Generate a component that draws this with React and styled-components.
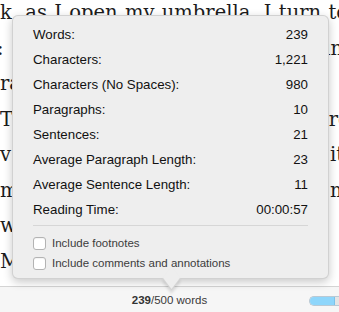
import React from 'react';
import styled, { createGlobalStyle } from 'styled-components';

const GlobalStyle = createGlobalStyle`
  html, body {
    margin: 0;
    padding: 0;
    background: #ffffff;
  }
  body {
    width: 339px;
    height: 312px;
    overflow: hidden;
  }
`;

const Screen = styled.div`
  position: relative;
  width: 339px;
  height: 312px;
  overflow: hidden;
  display: flex;
  flex-direction: column;
`;

const Document = styled.div`
  flex: 1;
  overflow: hidden;
  background: #ffffff;
`;

const Line = styled.div`
  width: ${p => p.$w ? `${p.$w}px` : 'auto'};
  height: 35.5px;
  line-height: 35.5px;
  margin-left: ${p => p.$shift || 0}px;
  margin-top: ${p => p.$first ? '-5px' : '0'};
  text-align: justify;
  text-align-last: ${p => p.$w ? 'justify' : 'left'};
  white-space: ${p => p.$w ? 'normal' : 'nowrap'};
  font-family: "DejaVu Serif", "Liberation Serif", serif;
  font-size: 19.5px;
  color: #1c1c1c;
`;

const StatusBar = styled.div`
  height: 25px;
  border-top: 1px solid #d4d4d4;
  background: #f6f6f6;
  display: grid;
  grid-template-columns: 1fr auto 1fr;
  align-items: center;
  font-family: "Liberation Sans", Arial, sans-serif;
  font-size: 11.5px;
  color: #3a3a3a;
`;

const Count = styled.div`
  grid-column: 2;
  padding-top: 1px;
  b {
    font-weight: bold;
    color: #333;
  }
`;

const Progress = styled.div`
  grid-column: 3;
  justify-self: end;
  width: 29px;
  height: 8px;
  margin-top: 2px;
  border: 1px solid #b9c9d4;
  border-right: none;
  border-radius: 5px 0 0 5px;
  background: #e4e4e4;
  overflow: hidden;
  display: flex;
`;

const Fill = styled.div`
  height: 100%;
  background: #8ed6fb;
  border-right: 1px solid #7cc3ea;
`;

const Popover = styled.div`
  position: absolute;
  left: 12px;
  top: 15px;
  width: 317px;
  height: 264px;
  box-sizing: border-box;
  padding: 6px 20px 0 20px;
  background: #eeeeee;
  border: 1px solid rgba(0, 0, 0, 0.12);
  border-radius: 6px;
  box-shadow: 0 3px 10px rgba(0, 0, 0, 0.22);
  font-family: "Liberation Sans", Arial, sans-serif;
  color: #111;

  &::after {
    content: '';
    position: absolute;
    left: 151px;
    bottom: -8px;
    width: 14px;
    height: 14px;
    background: #eeeeee;
    transform: rotate(45deg) skew(8deg, 8deg);
    box-shadow: 2px 2px 3px rgba(0, 0, 0, 0.12);
    border-right: 1px solid rgba(0, 0, 0, 0.1);
    border-bottom: 1px solid rgba(0, 0, 0, 0.1);
  }
`;

const StatRow = styled.div`
  height: 25px;
  display: flex;
  align-items: center;
  justify-content: space-between;
  font-size: 13.3px;
`;

const Divider = styled.div`
  height: 1px;
  background: #d6d6d6;
  margin-top: 3px;
  margin-bottom: 7px;
`;

const Option = styled.label`
  height: 20px;
  display: flex;
  align-items: center;
  gap: 6px;
  font-size: 11.5px;
  color: #3c3c3c;
`;

const Box = styled.span`
  width: 11px;
  height: 11px;
  border: 1px solid #b3b3b3;
  border-radius: 3px;
  background: #ffffff;
  box-shadow: inset 0 1px 1px rgba(0, 0, 0, 0.05);
`;

// w: justified line width, so the last word ends where the reference shows it
const lines = [
  { text: 'k, as I open my umbrella. I turn to', w: 348 },
  { text: ': the road and glance down in', w: 346, shift: -3 },
  { text: 'rain on the glass.' },
  { text: 'The street glows under a red', w: 362 },
  { text: 'v across the square, and it', w: 344 },
  { text: 'm the rooftops, calling me', w: 360 },
  { text: 'wind in the trees.' },
  { text: 'Mist over the harbour.' },
];

const stats = [
  ['Words:', '239'],
  ['Characters:', '1,221'],
  ['Characters (No Spaces):', '980'],
  ['Paragraphs:', '10'],
  ['Sentences:', '21'],
  ['Average Paragraph Length:', '23'],
  ['Average Sentence Length:', '11'],
  ['Reading Time:', '00:00:57'],
];

export default function App() {
  return (
    <Screen>
      <GlobalStyle />
      <Document>
        {lines.map((l, i) => (
          <Line key={i} $first={i === 0} $shift={l.shift} $w={l.w}>{l.text}</Line>
        ))}
      </Document>
      <StatusBar>
        <Count><b>239</b>/500 words</Count>
        <Progress>
          <Fill style={{ width: `${(239 / 500) * 100 * 1.7}%` }} />
        </Progress>
      </StatusBar>
      <Popover>
        {stats.map(([label, value]) => (
          <StatRow key={label}>
            <span>{label}</span>
            <span>{value}</span>
          </StatRow>
        ))}
        <Divider />
        <Option><Box />Include footnotes</Option>
        <Option><Box />Include comments and annotations</Option>
      </Popover>
    </Screen>
  );
}
